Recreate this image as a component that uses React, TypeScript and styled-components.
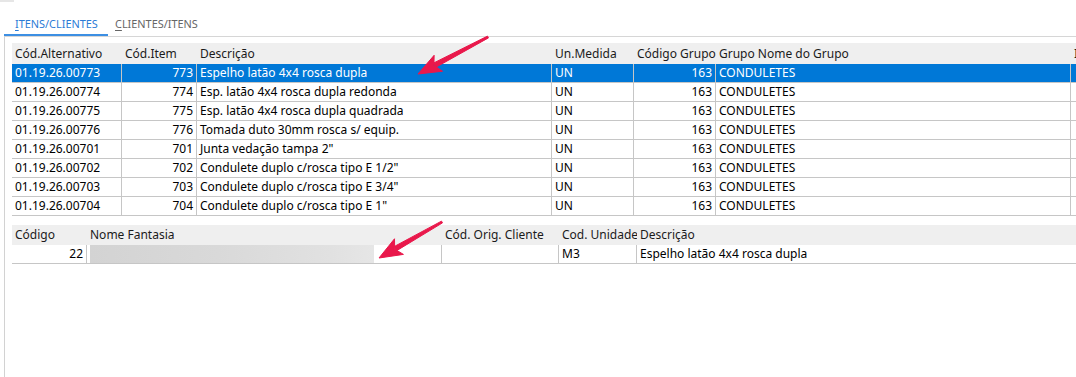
import React from "react";
import styled, { createGlobalStyle } from "styled-components";

const Global = createGlobalStyle`
  html, body { margin: 0; padding: 0; background: #ffffff; }
  body { font-family: "Noto Sans", "Open Sans", sans-serif; font-size: 12px; color: #000; }
  * { box-sizing: border-box; }
`;

const Page = styled.div`
  position: relative;
  width: 1076px;
  height: 377px;
  overflow: hidden;
  background: #fff;
`;

const TopStub = styled.div`
  width: 14px;
  height: 2px;
  background: #e6e6e6;
`;

const TabBar = styled.div`
  display: flex;
  height: 34px;
  padding-left: 4px;
`;

const Tab = styled.div<{ $active?: boolean; $w: number; $pl: number }>`
  width: ${(p) => p.$w}px;
  height: 34px;
  padding-top: 14px;
  padding-left: ${(p) => p.$pl}px;
  line-height: 16px;
  font-size: 10.9px;
  white-space: nowrap;
  color: ${(p) => (p.$active ? "#2a7bd6" : "#666666")};
  border-bottom: 2px solid ${(p) => (p.$active ? "#3d8fe3" : "transparent")};
  u { text-decoration: underline; text-underline-offset: 2px; }
`;

const Panel = styled.div`
  margin-left: 4px;
  border-left: 1px solid #d2d2d2;
  border-top: 1px solid #d6d6d6;
  padding: 6px 0 0 7px;
  height: 341px;
`;

const Grid = styled.div<{ $mt?: number }>`
  margin-top: ${(p) => p.$mt ?? 0}px;
  width: 1300px;
`;

const HeaderRow = styled.div<{ $cols: string; $h: number }>`
  display: grid;
  grid-template-columns: ${(p) => p.$cols};
  height: ${(p) => p.$h}px;
  background: #efefef;
`;

const HeaderCell = styled.div<{ $h: number }>`
  padding-left: 3px;
  line-height: ${(p) => p.$h}px;
  color: #1b1b1b;
  white-space: nowrap;
  overflow: hidden;
`;

const Row = styled.div<{ $cols: string; $selected?: boolean }>`
  display: grid;
  grid-template-columns: ${(p) => p.$cols};
  height: 19px;
  border-bottom: 1px solid #c6c6c6;
  background: ${(p) => (p.$selected ? "#0078d7" : "#ffffff")};
  color: ${(p) => (p.$selected ? "#ffffff" : "#000000")};
`;

const Cell = styled.div<{ $right?: boolean; $last?: boolean; $flush?: boolean }>`
  padding: ${(p) => (p.$flush ? "0" : "0 3px")};
  line-height: 18px;
  white-space: nowrap;
  overflow: hidden;
  text-align: ${(p) => (p.$right ? "right" : "left")};
  border-right: ${(p) => (p.$last ? "none" : "1px solid #c6c6c6")};
`;

const Blurred = styled.div`
  margin-left: 3px;
  width: 284px;
  height: 18px;
  background: linear-gradient(90deg, #d3d3d3 0%, #d9d9d9 45%, #e1e1e1 85%, #e6e6e6 100%);
`;

const Overlay = styled.svg`
  position: absolute;
  left: 0;
  top: 0;
  pointer-events: none;
`;

const cols1 = "110px 75px 355px 82px 82px 355px 200px";
const cols2 = "75px 355px 117px 78px 600px";

const items = [
  ["01.19.26.00773", "773", "Espelho latão 4x4 rosca dupla"],
  ["01.19.26.00774", "774", "Esp. latão 4x4 rosca dupla redonda"],
  ["01.19.26.00775", "775", "Esp. latão 4x4 rosca dupla quadrada"],
  ["01.19.26.00776", "776", "Tomada duto 30mm rosca s/ equip."],
  ["01.19.26.00701", "701", "Junta vedação tampa 2\""],
  ["01.19.26.00702", "702", "Condulete duplo c/rosca tipo E 1/2\""],
  ["01.19.26.00703", "703", "Condulete duplo c/rosca tipo E 3/4\""],
  ["01.19.26.00704", "704", "Condulete duplo c/rosca tipo E 1\""],
];

type Pt = [number, number];
function Arrow({ tail, tip }: { tail: Pt; tip: Pt }) {
  const dx = tip[0] - tail[0];
  const dy = tip[1] - tail[1];
  const len = Math.hypot(dx, dy);
  const ux = dx / len;
  const uy = dy / len;
  const nx = -uy;
  const ny = ux;
  const hl = 23;
  const hw = 9;
  const bx = tip[0] - ux * hl;
  const by = tip[1] - uy * hl;
  const nbx = tip[0] - ux * (hl - 5);
  const nby = tip[1] - uy * (hl - 5);
  const head = [
    [tip[0], tip[1]],
    [bx + nx * hw, by + ny * hw],
    [nbx, nby],
    [bx - nx * hw, by - ny * hw],
  ]
    .map((p) => p.join(","))
    .join(" ");
  const ex = nbx - ux;
  const ey = nby - uy;
  const shaft = [
    [tail[0] + nx, tail[1] + ny],
    [ex + nx * 2.4, ey + ny * 2.4],
    [ex - nx * 2.4, ey - ny * 2.4],
    [tail[0] - nx, tail[1] - ny],
  ]
    .map((p) => p.join(","))
    .join(" ");
  return (
    <g fill="#e9184b" stroke="#e9184b" strokeLinejoin="round">
      <polygon points={shaft} strokeWidth={1} />
      <polygon points={head} strokeWidth={1} />
    </g>
  );
}

export default function App() {
  return (
    <Page>
      <Global />
      <TopStub />
      <TabBar>
        <Tab $active $w={104} $pl={11}>
          <u>I</u>TENS/CLIENTES
        </Tab>
        <Tab $w={120} $pl={7}>
          <u>C</u>LIENTES/ITENS
        </Tab>
      </TabBar>
      <Panel>
        <Grid>
          <HeaderRow $cols={cols1} $h={21}>
            <HeaderCell $h={21}>Cód.Alternativo</HeaderCell>
            <HeaderCell $h={21}>Cód.Item</HeaderCell>
            <HeaderCell $h={21}>Descrição</HeaderCell>
            <HeaderCell $h={21}>Un.Medida</HeaderCell>
            <HeaderCell $h={21}>Código Grupo</HeaderCell>
            <HeaderCell $h={21}>Grupo Nome do Grupo</HeaderCell>
            <HeaderCell $h={21}>Item</HeaderCell>
          </HeaderRow>
          {items.map((it, i) => (
            <Row key={it[0]} $cols={cols1} $selected={i === 0}>
              <Cell>{it[0]}</Cell>
              <Cell $right>{it[1]}</Cell>
              <Cell>{it[2]}</Cell>
              <Cell>UN</Cell>
              <Cell $right>163</Cell>
              <Cell>CONDULETES</Cell>
              <Cell $last />
            </Row>
          ))}
        </Grid>
        <Grid $mt={9}>
          <HeaderRow $cols={cols2} $h={20}>
            <HeaderCell $h={20}>Código</HeaderCell>
            <HeaderCell $h={20}>Nome Fantasia</HeaderCell>
            <HeaderCell $h={20}>Cód. Orig. Cliente</HeaderCell>
            <HeaderCell $h={20}>Cod. Unidade</HeaderCell>
            <HeaderCell $h={20}>Descrição</HeaderCell>
          </HeaderRow>
          <Row $cols={cols2}>
            <Cell $right>22</Cell>
            <Cell $flush>
              <Blurred />
            </Cell>
            <Cell />
            <Cell>M3</Cell>
            <Cell $last>Espelho latão 4x4 rosca dupla</Cell>
          </Row>
        </Grid>
      </Panel>
      <Overlay width={1076} height={377} viewBox="0 0 1076 377">
        <Arrow tail={[488, 37]} tip={[418, 74]} />
        <Arrow tail={[442, 222]} tip={[379, 258]} />
      </Overlay>
    </Page>
  );
}
